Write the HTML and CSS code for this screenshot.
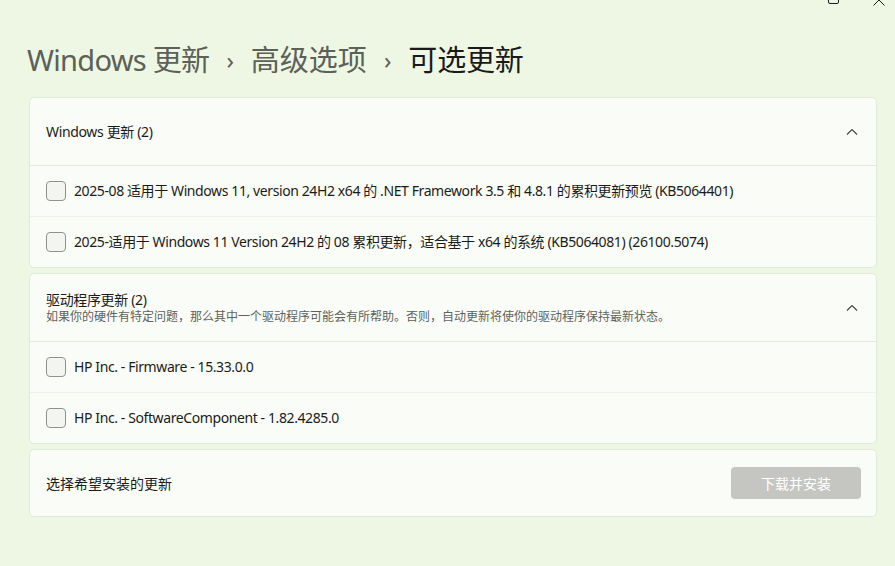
FILE: index.html
```html
<!DOCTYPE html>
<html lang="zh-CN">
<head>
<meta charset="utf-8">
<title>可选更新</title>
<link rel="stylesheet" href="styles.css">
</head>
<body>
<div class="caption-buttons">
  <svg class="cap-max" width="12" height="12" viewBox="0 0 12 12"><rect x="0.5" y="0.5" width="10" height="10" rx="1.5" fill="none" stroke="#1a1a1a" stroke-width="1"/></svg>
  <svg class="cap-close" width="12" height="12" viewBox="0 0 12 12"><path d="M0.5 0.5 L11.5 11.5 M11.5 0.5 L0.5 11.5" stroke="#1a1a1a" stroke-width="1" fill="none"/></svg>
</div>
<main class="page">
  <h1 class="breadcrumb">
    <span class="crumb first">Windows 更新</span>
    <span class="sep">›</span>
    <span class="crumb">高级选项</span>
    <span class="sep">›</span>
    <span class="crumb current">可选更新</span>
  </h1>

  <section class="card">
    <div class="card-header">
      <div class="header-text">
        <div class="header-title">Windows 更新 (2)</div>
      </div>
      <svg class="chevron" width="12" height="8" viewBox="0 0 12 8"><path d="M1 6.5 L6 1.5 L11 6.5" fill="none" stroke="#444" stroke-width="1.2"/></svg>
    </div>
    <div class="row"><span class="checkbox"></span><span class="row-label">2025-08 适用于 Windows 11, version 24H2 x64 的 .NET Framework 3.5 和 4.8.1 的累积更新预览 (KB5064401)</span></div>
    <div class="row"><span class="checkbox"></span><span class="row-label">2025-适用于 Windows 11 Version 24H2 的 08 累积更新，适合基于 x64 的系统 (KB5064081) (26100.5074)</span></div>
  </section>

  <section class="card">
    <div class="card-header">
      <div class="header-text">
        <div class="header-title">驱动程序更新 (2)</div>
        <div class="header-sub">如果你的硬件有特定问题，那么其中一个驱动程序可能会有所帮助。否则，自动更新将使你的驱动程序保持最新状态。</div>
      </div>
      <svg class="chevron" width="12" height="8" viewBox="0 0 12 8"><path d="M1 6.5 L6 1.5 L11 6.5" fill="none" stroke="#444" stroke-width="1.2"/></svg>
    </div>
    <div class="row"><span class="checkbox"></span><span class="row-label">HP Inc. - Firmware - 15.33.0.0</span></div>
    <div class="row"><span class="checkbox"></span><span class="row-label">HP Inc. - SoftwareComponent - 1.82.4285.0</span></div>
  </section>

  <section class="card action-card">
    <span class="action-label">选择希望安装的更新</span>
    <button class="btn-disabled" disabled>下载并安装</button>
  </section>
</main>
</body>
</html>
```

FILE: styles.css
```css
* { box-sizing: border-box; }
html, body { margin: 0; padding: 0; }
body {
  width: 895px;
  height: 566px;
  overflow: hidden;
  background: #eef7e3;
  font-family: "Noto Sans", "Noto Sans CJK SC", sans-serif;
  color: #1b1b1b;
  position: relative;
}
.caption-buttons { position: absolute; top: 0; right: 0; width: 100px; height: 10px; }
.cap-max { position: absolute; left: 33px; top: -7px; }
.cap-close { position: absolute; left: 78px; top: -6px; }

.page {
  padding: 38px 18px 0 29px;
  display: flex;
  flex-direction: column;
  gap: 5px;
}
.breadcrumb {
  margin: 0 0 10px -2px;
  font-weight: 400;
  font-size: 29px;
  line-height: 44px;
  height: 44px;
  display: flex;
  align-items: center;
  gap: 14px;
  color: #5b6058;
  white-space: nowrap;
}
.breadcrumb .first { letter-spacing: -0.7px; }
.breadcrumb .sep { font-size: 24px; color: #5b6058; padding: 0 3px; }
.breadcrumb .current { color: #1a1a1a; letter-spacing: -0.2px; }

.card {
  background: #fafdf7;
  border: 1px solid #e1e9da;
  border-radius: 5px;
  overflow: hidden;
}
.card-header {
  height: 68px;
  display: flex;
  align-items: center;
  padding: 0 18px 0 16px;
  border-bottom: 1px solid #e1e9da;
}
.header-text { flex: 1; }
.header-title { font-size: 14px; line-height: 18px; letter-spacing: -0.35px; }
.header-sub { font-size: 12px; line-height: 16px; color: #5f625d; }
.chevron { display: block; }

.row {
  height: 51px;
  display: flex;
  align-items: center;
  padding-left: 16px;
  gap: 8px;
  border-top: 1px solid #eef3e9;
}
.card-header + .row { border-top: none; height: 50px; }
.checkbox {
  width: 20px;
  height: 20px;
  border: 1px solid #8e918c;
  border-radius: 4px;
  background: #f3f5f0;
  flex: none;
}
.row-label { font-size: 14px; line-height: 20px; white-space: nowrap; letter-spacing: -0.4px; }

.action-card {
  height: 68px;
  display: flex;
  align-items: center;
  justify-content: space-between;
  padding: 0 15px 0 16px;
}
.action-label { font-size: 14px; }
.btn-disabled {
  width: 130px;
  height: 32px;
  border: none;
  border-radius: 4px;
  background: #c5c6c2;
  color: #ffffff;
  font-family: "Noto Sans CJK SC", sans-serif;
  font-size: 14px;
}
```
